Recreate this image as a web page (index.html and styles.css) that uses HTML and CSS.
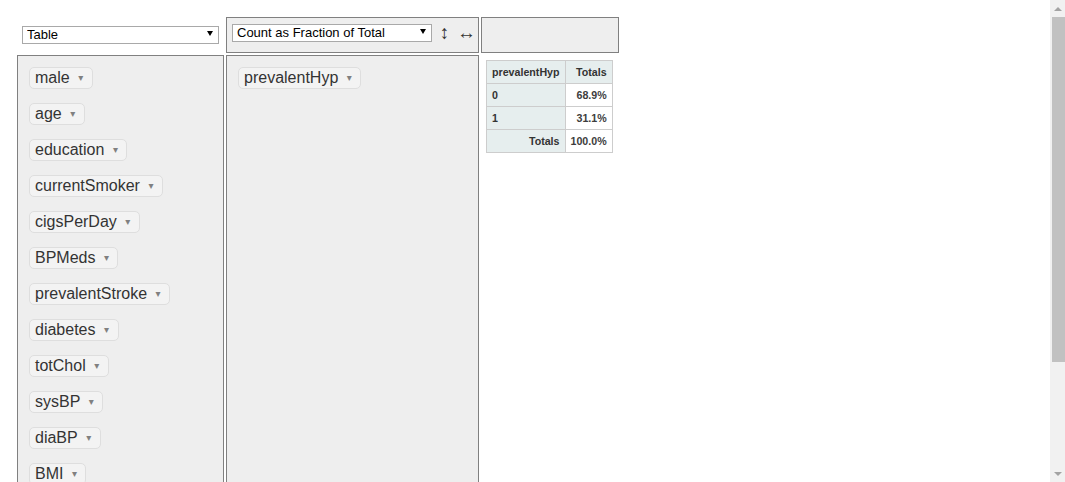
FILE: index.html
```html
<!DOCTYPE html>
<html>
<head>
<meta charset="utf-8">
<title>Pivot</title>
<link rel="stylesheet" href="styles.css">
</head>
<body>
<div class="pvtUi">
  <div class="cell renderer-cell">
    <div class="select-wrap"><select class="pvt-select renderer"><option>Table</option></select></div>
  </div>
  <div class="cell axis vals">
    <div class="select-wrap"><select class="pvt-select aggregator"><option>Count as Fraction of Total</option></select></div>
    <span class="order">↕</span><span class="order">↔</span>
  </div>
  <div class="cell axis cols"></div>
  <div class="cell axis unused">
    <ul class="attr-list">
      <li><span class="attr">male<span class="tri">▾</span></span></li>
      <li><span class="attr">age<span class="tri">▾</span></span></li>
      <li><span class="attr">education<span class="tri">▾</span></span></li>
      <li><span class="attr">currentSmoker<span class="tri">▾</span></span></li>
      <li><span class="attr">cigsPerDay<span class="tri">▾</span></span></li>
      <li><span class="attr">BPMeds<span class="tri">▾</span></span></li>
      <li><span class="attr">prevalentStroke<span class="tri">▾</span></span></li>
      <li><span class="attr">diabetes<span class="tri">▾</span></span></li>
      <li><span class="attr">totChol<span class="tri">▾</span></span></li>
      <li><span class="attr">sysBP<span class="tri">▾</span></span></li>
      <li><span class="attr">diaBP<span class="tri">▾</span></span></li>
      <li><span class="attr">BMI<span class="tri">▾</span></span></li>
      <li><span class="attr">heartRate<span class="tri">▾</span></span></li>
      <li><span class="attr">glucose<span class="tri">▾</span></span></li>
      <li><span class="attr">TenYearCHD<span class="tri">▾</span></span></li>
    </ul>
  </div>
  <div class="cell axis rows">
    <ul class="attr-list">
      <li><span class="attr">prevalentHyp<span class="tri">▾</span></span></li>
    </ul>
  </div>
  <div class="cell output">
    <table class="pvtTable">
      <thead>
        <tr><th class="axis-label">prevalentHyp</th><th class="total-label">Totals</th></tr>
      </thead>
      <tbody>
        <tr><th class="row-label">0</th><td>68.9%</td></tr>
        <tr><th class="row-label">1</th><td>31.1%</td></tr>
        <tr><th class="total-label">Totals</th><td>100.0%</td></tr>
      </tbody>
    </table>
  </div>
</div>
<div class="scrollbar" aria-hidden="true">
  <div class="sb-btn sb-up"></div>
  <div class="sb-thumb"></div>
  <div class="sb-btn sb-down"></div>
</div>
</body>
</html>
```

FILE: styles.css
```css
body {
  margin: 8px;
  font-family: "Liberation Sans", Arial, sans-serif;
  color: #333;
}

.scrollbar {
  position: fixed;
  top: 0;
  right: 0;
  bottom: 0;
  width: 15px;
  background: #f1f1f1;
  display: flex;
  flex-direction: column;
}

.sb-btn {
  height: 17px;
  flex: none;
  display: flex;
  align-items: center;
  justify-content: center;
}

.sb-btn::before {
  content: "";
  border-left: 4px solid transparent;
  border-right: 4px solid transparent;
}

.sb-up::before {
  border-bottom: 4px solid #a3a3a3;
}

.sb-down {
  margin-top: auto;
}

.sb-down::before {
  border-top: 4px solid #a3a3a3;
}

.sb-thumb {
  height: 345px;
  margin-left: 2px;
  background: #c1c1c1;
  flex: none;
}

.pvtUi {
  display: grid;
  grid-template-columns: 207px 253px 138px;
  grid-template-rows: 36px auto;
  gap: 2px;
  padding: 9px 0 10px 9px;
}

.cell {
  box-sizing: border-box;
}

.axis {
  border: 1px solid #808080;
  background: #eeeeee;
  padding: 5px;
}

.renderer-cell {
  padding: 8px 5px 0 5px;
}

.vals {
  display: flex;
  align-items: flex-start;
}

.select-wrap {
  position: relative;
  display: inline-block;
}

.select-wrap::after {
  content: "";
  position: absolute;
  right: 6px;
  top: 6px;
  border-left: 3px solid transparent;
  border-right: 3px solid transparent;
  border-top: 5px solid #000;
  pointer-events: none;
}

.pvt-select {
  -webkit-appearance: none;
  appearance: none;
  box-sizing: border-box;
  height: 18px;
  margin: 0;
  padding: 0 4px;
  border: 1px solid #a9a9a9;
  border-radius: 0;
  background: #fff;
  color: #000;
  font-family: "Liberation Sans", Arial, sans-serif;
  font-size: 13px;
  line-height: 16px;
}

.renderer {
  width: 197px;
}

.aggregator {
  width: 200px;
}

.order {
  display: inline-block;
  width: 15px;
  margin-left: 5px;
  text-align: center;
  font-family: "Liberation Sans", Arial, sans-serif;
  font-size: 19px;
  line-height: 20px;
  color: #333;
}

.attr-list {
  list-style: none;
  margin: 0;
  padding: 0;
}

.attr-list li {
  padding: 6px 6px 8px;
  line-height: 22px;
  white-space: nowrap;
}

.attr {
  display: inline-block;
  vertical-align: top;
  padding: 2px 5px;
  line-height: 16px;
  font-size: 16px;
  background: #f3f3f3;
  border: 1px solid #dedede;
  border-radius: 5px;
  color: #333;
}

.tri {
  display: inline-block;
  width: 12px;
  margin-left: 5px;
  text-align: center;
  font-family: "DejaVu Sans", sans-serif;
  font-size: 10px;
  color: #808080;
  vertical-align: top;
}

.output {
  padding: 5px;
}

.pvtTable {
  border-collapse: collapse;
  font-size: 8pt;
  font-weight: bold;
  text-align: left;
}

.pvtTable th {
  background: #e6eeee;
  border: 1px solid #cdcdcd;
  padding: 5px;
  line-height: 12px;
  color: #333;
  font-size: 8pt;
}

.pvtTable td {
  background: #fff;
  border: 1px solid #cdcdcd;
  padding: 5px;
  line-height: 12px;
  color: #3d3d3d;
  text-align: right;
  vertical-align: top;
}

.pvtTable .axis-label,
.pvtTable .row-label {
  text-align: left;
}

.pvtTable .total-label {
  text-align: right;
}
```
